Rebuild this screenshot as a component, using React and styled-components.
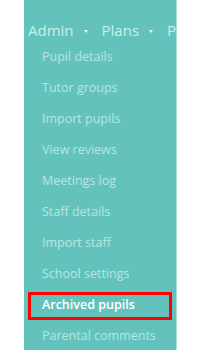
import styled, { createGlobalStyle } from "styled-components";

const GlobalStyle = createGlobalStyle`
    body {
        margin: 0;
        background: #ffffff;
        font-family: 'Open Sans', sans-serif;
    }
`

const navItems = ["Admin", "Plans", "Progress"];

const menuItems = [
    "Pupil details",
    "Tutor groups",
    "Import pupils",
    "View reviews",
    "Meetings log",
    "Staff details",
    "Import staff",
    "School settings",
    "Archived pupils",
    "Parental comments",
];

export default function App() {
    return (
        <>
            <GlobalStyle />
            <Column>
                <NavBar>
                    {navItems.map((item) => (
                        <NavItem key={item}>
                            {item}
                            <Caret />
                        </NavItem>
                    ))}
                </NavBar>
                <Menu>
                    {menuItems.map((item) => (
                        <MenuItem key={item} active={item === "Archived pupils"}>
                            {item}
                        </MenuItem>
                    ))}
                </Menu>
            </Column>
        </>
    );
}

const Column = styled.div`
    margin-left: 24px;
    width: 152px;
    height: 350px;
    background-color: #63c3bc;
    border-right: 1px solid #a9deda;
    overflow: hidden;
`
const NavBar = styled.nav`
    display: flex;
    flex-wrap: nowrap;
    height: 44px;
    box-sizing: border-box;
    padding: 16px 0 0 4px;
    gap: 14px;
    white-space: nowrap;
`
const NavItem = styled.div`
    display: flex;
    align-items: center;
    gap: 10px;
    font-size: 15px;
    line-height: 20px;
    color: #c9efeb;
`
const Caret = styled.span`
    width: 0;
    height: 0;
    margin-top: 2px;
    border-left: 2.5px solid transparent;
    border-right: 2.5px solid transparent;
    border-top: 3px solid #e6f8f6;
`
const Menu = styled.ul`
    list-style: none;
    margin: 0;
    padding: 0 4px;
    display: flex;
    flex-direction: column;
    gap: 3px;
`
const MenuItem = styled.li.withConfig({
    shouldForwardProp: (prop) => prop !== "active",
})`
    box-sizing: border-box;
    height: 28px;
    padding: 0 0 2px 11px;
    border: 3.5px solid ${props => props.active ? "#ff0000" : "transparent"};
    font-size: 12.5px;
    line-height: 20px;
    white-space: nowrap;
    color: ${props => props.active ? "#ffffff" : "#b7e6e2"};
    font-weight: ${props => props.active ? 600 : 400};
`
